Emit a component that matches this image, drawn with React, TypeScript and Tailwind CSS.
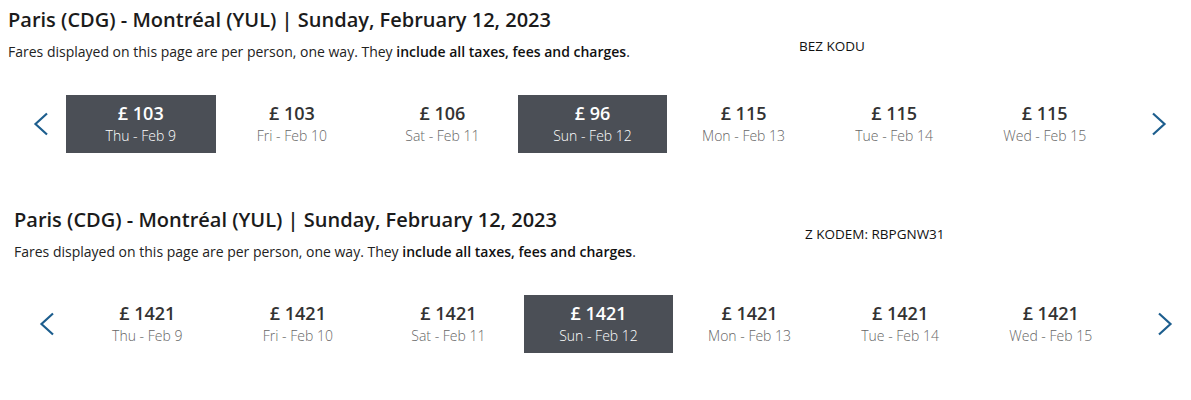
import React from 'react';

interface Fare {
  price: string;
  label: string;
  selected?: boolean;
}

interface FareSectionProps {
  note: string;
  fares: Fare[];
  offset: string;
  noteClass: string;
}

const ROW_ONE: Fare[] = [
  { price: '£ 103', label: 'Thu - Feb 9', selected: true },
  { price: '£ 103', label: 'Fri - Feb 10' },
  { price: '£ 106', label: 'Sat - Feb 11' },
  { price: '£ 96', label: 'Sun - Feb 12', selected: true },
  { price: '£ 115', label: 'Mon - Feb 13' },
  { price: '£ 115', label: 'Tue - Feb 14' },
  { price: '£ 115', label: 'Wed - Feb 15' },
];

const ROW_TWO: Fare[] = [
  { price: '£ 1421', label: 'Thu - Feb 9' },
  { price: '£ 1421', label: 'Fri - Feb 10' },
  { price: '£ 1421', label: 'Sat - Feb 11' },
  { price: '£ 1421', label: 'Sun - Feb 12', selected: true },
  { price: '£ 1421', label: 'Mon - Feb 13' },
  { price: '£ 1421', label: 'Tue - Feb 14' },
  { price: '£ 1421', label: 'Wed - Feb 15' },
];

function Chevron({ dir }: { dir: 'left' | 'right' }) {
  return (
    <svg width="16" height="24" viewBox="0 0 16 24" fill="none" className="text-[#1d5e8e]">
      <path
        d={dir === 'left' ? 'M14 1.5 L2.5 12 L14 22.5' : 'M2 1.5 L13.5 12 L2 22.5'}
        stroke="currentColor"
        strokeWidth="2.2"
      />
    </svg>
  );
}

function FareSection({ note, fares, offset, noteClass }: FareSectionProps) {
  return (
    <section className={`relative h-[200px] ${offset}`}>
      <h2 className="pt-[6px] text-[20px] leading-[28px] font-semibold text-[#1b1b1b]">
        Paris (CDG) - Montréal (YUL) | Sunday, February 12, 2023
      </h2>
      <p className="mt-[8px] text-[14px] leading-[20px] text-[#222]">
        Fares displayed on this page are per person, one way. They{' '}
        <span className="font-semibold text-[#111]">include all taxes, fees and charges</span>.
      </p>
      <div className={`absolute text-[13.5px] leading-[19px] text-[#111] ${noteClass}`}>{note}</div>

      {/* Date carousel */}
      <div className="mt-[33px] flex items-center">
        <button className="flex w-[58px] pl-[25px] items-center">
          <Chevron dir="left" />
        </button>
        <div className="grid w-[1054px] grid-cols-7">
          {fares.map((f) => (
            <div
              key={f.label}
              className={`flex h-[58px] flex-col items-center justify-center pb-[1px] ${
                f.selected ? 'mr-[1px] bg-[#4b4f56] text-white' : 'text-[#333]'
              }`}
            >
              <span className="text-[18px] leading-[25px] font-semibold">{f.price}</span>
              <span className={`text-[14px] leading-[19.5px] font-light ${f.selected ? 'text-white' : 'text-[#666]'}`}>
                {f.label}
              </span>
            </div>
          ))}
        </div>
        <button className="ml-[31px] flex items-center">
          <Chevron dir="right" />
        </button>
      </div>
    </section>
  );
}

export default function App() {
  return (
    <div className="h-[400px] w-[1191px] bg-white font-['Open_Sans',sans-serif]">
      <FareSection note="BEZ KODU" fares={ROW_ONE} offset="pl-[8px]" noteClass="left-[799px] top-[37px]" />
      <FareSection note="Z KODEM: RBPGNW31" fares={ROW_TWO} offset="pl-[14px]" noteClass="left-[805px] top-[25px]" />
    </div>
  );
}
